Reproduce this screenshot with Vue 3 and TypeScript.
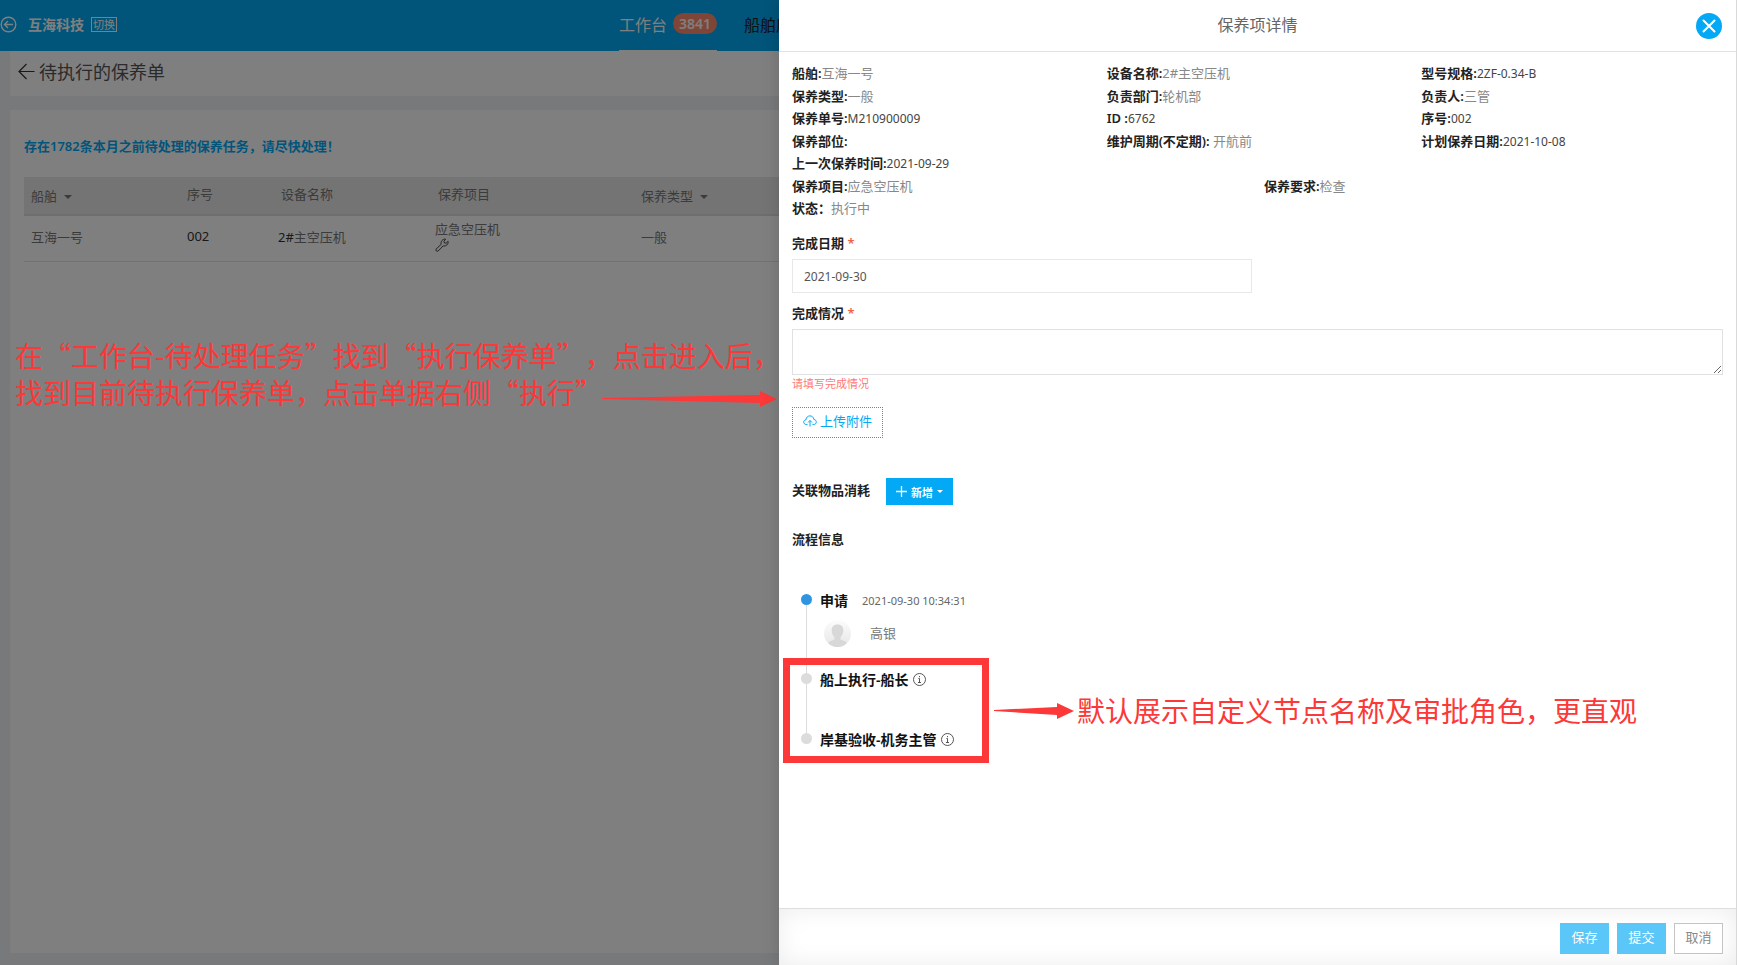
<script setup lang="ts">
import { ref } from 'vue'

interface Field {
  label: string
  value: string
  latin?: boolean
}

const fieldRows: Field[][] = [
  [
    { label: '船舶:', value: '互海一号' },
    { label: '设备名称:', value: '2#主空压机' },
    { label: '型号规格:', value: '2ZF-0.34-B', latin: true },
  ],
  [
    { label: '保养类型:', value: '一般' },
    { label: '负责部门:', value: '轮机部' },
    { label: '负责人:', value: '三管' },
  ],
  [
    { label: '保养单号:', value: 'M210900009', latin: true },
    { label: 'ID :', value: '6762', latin: true },
    { label: '序号:', value: '002', latin: true },
  ],
  [
    { label: '保养部位:', value: '' },
    { label: '维护周期(不定期):', value: ' 开航前' },
    { label: '计划保养日期:', value: '2021-10-08', latin: true },
  ],
  [{ label: '上一次保养时间:', value: '2021-09-29', latin: true }],
  [
    { label: '保养项目:', value: '应急空压机' },
    { label: '保养要求:', value: '检查' },
  ],
  [{ label: '状态：', value: '执行中' }],
]

const finishDate = ref('2021-09-30')
const finishNote = ref('')
</script>

<template>
  <div class="screen">
    <div class="app">
      <header class="topbar">
        <a href="#" class="back-link" aria-label="返回">
          <svg width="17" height="17" viewBox="0 0 17 17" fill="none" stroke="#fff" stroke-width="1.4">
            <circle cx="8.5" cy="8.5" r="7.3" />
            <path d="M13 8.5H4.5M8 5L4.5 8.5L8 12" />
          </svg>
        </a>
        <strong class="company">互海科技</strong>
        <button type="button" class="switch">切换</button>
        <nav class="nav">
          <a href="#" class="nav-item active">工作台<span class="count">3841</span></a>
          <a href="#" class="nav-item">船舶应用</a>
        </nav>
      </header>
      <main class="content">
        <div class="title-card">
          <svg width="17" height="17" viewBox="0 0 17 17" fill="none" stroke="#333" stroke-width="1.2">
            <path d="M16.500 8.500H1M8.500 1L1 8.500L8.500 16" />
          </svg>
          <h1>待执行的保养单</h1>
        </div>
        <section class="list-card">
          <p class="notice">存在1782条本月之前待处理的保养任务，请尽快处理！</p>
          <table class="orders">
            <colgroup>
              <col class="c-ship" /><col class="c-no" /><col class="c-device" /><col class="c-item" /><col />
            </colgroup>
            <thead>
              <tr>
                <th class="sortable">船舶<i class="caret"></i></th>
                <th>序号</th>
                <th class="inset">设备名称</th>
                <th class="inset">保养项目</th>
                <th class="sortable">保养类型<i class="caret"></i></th>
              </tr>
            </thead>
            <tbody>
              <tr>
                <td>互海一号</td>
                <td class="dark">002</td>
                <td><span class="dark">2#</span>主空压机</td>
                <td class="item-cell">
                  应急空压机
                  <svg width="14" height="14" viewBox="0 0 14 14" fill="none" stroke="#444" stroke-width="1" stroke-linejoin="round">
                    <path d="M1 11.200L6.200 6.300C5.500 3.500 7.500 .8 10.600 1.100L8.900 3.200L9.400 4.900L11.200 5.200L13.100 3.300C13.600 6.200 11.200 8.500 8.200 7.900L3.200 13C1.800 13.800 .2 12.600 1 11.200Z" />
                  </svg>
                </td>
                <td>一般</td>
              </tr>
            </tbody>
          </table>
        </section>
      </main>
    </div>

    <div class="mask">
      <div class="guide">
        <p>在“工作台-待处理任务”找到“执行保养单”，点击进入后，<br />找到目前待执行保养单，点击单据右侧“执行”</p>
        <svg class="guide-arrow" width="175" height="16" viewBox="0 0 175 16" fill="#fc3838">
          <path d="M0 7L158 4V0L175 8L158 16V12L0 8Z" />
        </svg>
      </div>

      <aside class="drawer">
        <header class="drawer-head">
          <h2>保养项详情</h2>
          <button type="button" class="close" aria-label="关闭">
            <svg width="14" height="14" viewBox="0 0 14 14" stroke="#fff" stroke-width="2" stroke-linecap="round">
              <path d="M1.500 1.500L12.500 12.500M12.500 1.500L1.500 12.500" />
            </svg>
          </button>
        </header>

        <div class="drawer-body">
          <div class="fields">
            <div v-for="(row, i) in fieldRows" :key="i" class="field-row" :class="{ halves: row.length === 2 }">
              <div v-for="f in row" :key="f.label">
                <b>{{ f.label }}</b><span class="value" :class="{ latin: f.latin }">{{ f.value }}</span>
              </div>
            </div>
          </div>

          <form class="form" @submit.prevent>
            <label for="finish-date">完成日期 <em>*</em></label>
            <input id="finish-date" v-model="finishDate" type="text" />
            <label for="finish-note">完成情况 <em>*</em></label>
            <textarea id="finish-note" v-model="finishNote"></textarea>
            <p class="error">请填写完成情况</p>
            <button type="button" class="upload">
              <svg width="14" height="12" viewBox="0 0 14 12" fill="none" stroke="#03a9f4" stroke-width="1">
                <path d="M4.500 9.500H3.200C-.2 9.200 .1 5 3 4.800C3.300-.3 10.300-.4 10.900 4.400C14.200 4.900 14 9.300 10.800 9.500H9.500M7 11.500V5.500M5 7.500L7 5.500L9 7.500" />
              </svg>
              上传附件
            </button>
          </form>

          <div class="consume">
            <b>关联物品消耗</b>
            <button type="button" class="add">
              <svg width="11" height="11" viewBox="0 0 11 11" stroke="#fff" stroke-width="1.3"><path d="M5.500 0V11M0 5.500H11" /></svg>
              新增
              <i class="caret small"></i>
            </button>
          </div>

          <h3>流程信息</h3>

          <div class="flow">
            <ol class="timeline">
              <li class="node done">
                <div class="node-head"><strong>申请</strong><time>2021-09-30 10:34:31</time></div>
                <div class="person">
                  <svg width="27" height="27" viewBox="0 0 27 27">
                    <defs>
                      <linearGradient id="avatar-bg" x1="0" y1="0" x2="0" y2="1">
                        <stop offset="0" stop-color="#fcfcfc" /><stop offset="1" stop-color="#e6e6e6" />
                      </linearGradient>
                      <clipPath id="avatar-clip"><circle cx="13.500" cy="13.500" r="13.500" /></clipPath>
                    </defs>
                    <g clip-path="url(#avatar-clip)">
                      <rect width="27" height="27" fill="url(#avatar-bg)" />
                      <path d="M13.500 4.500C17.500 4.500 19.600 7 19.300 11C19.100 14 17.800 15.800 16.600 17V19.500C19 20.800 22 21 23.500 24V27H3.500V24C5 21 8 20.800 10.400 19.500V17C9.200 15.800 7.900 14 7.700 11C7.400 7 9.500 4.500 13.500 4.500Z" fill="#d8d8d8" />
                    </g>
                  </svg>
                  <span>高银</span>
                </div>
              </li>
              <li v-for="name in ['船上执行-船长', '岸基验收-机务主管']" :key="name" class="node">
                <div class="node-head">
                  <strong>{{ name }}</strong>
                  <svg class="info" width="13" height="13" viewBox="0 0 13 13" fill="none" stroke="#444" stroke-width=".9">
                    <circle cx="6.500" cy="6.500" r="6" />
                    <path d="M6.500 3V4.200M5.400 5.500H6.500V9.500M5 9.500H8" />
                  </svg>
                </div>
              </li>
            </ol>
            <div class="highlight"></div>
            <div class="remark">
              <svg width="80" height="16" viewBox="0 0 80 16" fill="#fc3838"><path d="M0 7L63 4V0L80 8L63 16V12L0 8Z" /></svg>
              <span>默认展示自定义节点名称及审批角色，更直观</span>
            </div>
          </div>
        </div>

        <footer class="drawer-foot">
          <button type="button" class="primary">保存</button>
          <button type="button" class="primary">提交</button>
          <button type="button" class="cancel">取消</button>
        </footer>
      </aside>
    </div>
  </div>
</template>

<style>
body {
  margin: 0;
}
</style>

<style scoped>
.screen {
  position: relative;
  min-height: 100vh;
  overflow: hidden;
  font-family: 'Noto Sans', 'Noto Sans CJK SC', sans-serif;
  font-size: 13px;
  color: #777;
}
.screen *,
.screen *::before {
  box-sizing: border-box;
}
button,
input,
textarea {
  font: inherit;
}
h1,
h2,
h3,
p,
ol {
  margin: 0;
  padding: 0;
  font-weight: 400;
}
a {
  color: inherit;
  text-decoration: none;
}

.app {
  display: flex;
  flex-direction: column;
  min-height: 100vh;
  background: #eff2f7;
}
.topbar {
  display: flex;
  align-items: center;
  height: 51px;
  padding-bottom: 3px;
  background: #03a9f4;
  color: #fff;
}
.back-link {
  display: flex;
  width: 28px;
}
.company {
  font-size: 14px;
}
.switch {
  height: 15px;
  margin-left: 7px;
  padding: 0 1px;
  border: 1px solid #fff;
  background: none;
  color: #fff;
  font-size: 11px;
  line-height: 13px;
}
.nav {
  display: flex;
  gap: 27px;
  height: 51px;
  margin: 0 0 -3px auto;
  width: 1118px;
  font-size: 16px;
}
.nav-item {
  display: flex;
  align-items: center;
  color: #222;
  padding-bottom: 4px;
}
.nav-item.active {
  gap: 6px;
  padding-bottom: 3px;
  border-bottom: 1px solid #fff;
  color: #fff;
}
.count {
  padding: 0 6px;
  border-radius: 11px;
  background: #ff8a6c;
  font-size: 14px;
  font-weight: 600;
  line-height: 21px;
}
.content {
  display: flex;
  flex: 1;
  flex-direction: column;
  gap: 14px;
  padding: 0 0 12px 10px;
}
.title-card {
  display: flex;
  align-items: center;
  gap: 4px;
  height: 45px;
  padding: 0 8px 4px;
  background: #fff;
}
h1 {
  color: #555;
  font-size: 18px;
  line-height: 26px;
}
.list-card {
  flex: 1;
  padding: 24px 14px;
  background: #fff;
}
.notice {
  margin-bottom: 19px;
  color: #03a9f4;
  font-weight: 600;
  font-size: 13px;
  line-height: 24px;
}
.orders {
  width: 100%;
  border-collapse: collapse;
  table-layout: fixed;
}
.c-ship {
  width: 156px;
}
.c-no {
  width: 91px;
}
.c-device {
  width: 157px;
}
.c-item {
  width: 206px;
}
.orders th {
  height: 38px;
  padding: 0 7px 4px;
  border-bottom: 2px solid #dcdcdc;
  background: #e9e9e9;
  font-weight: 400;
  text-align: left;
}
.orders th.sortable {
  padding-bottom: 0;
}
.orders th.inset {
  padding-left: 10px;
}
.orders td {
  height: 46px;
  padding: 0 7px 4px;
  border-bottom: 1px solid #e4e4e4;
}
.orders .dark {
  color: #333;
}
.orders .item-cell {
  line-height: 17px;
}
.item-cell svg {
  display: block;
}
.caret {
  display: inline-block;
  margin-left: 7px;
  border: 4px solid transparent;
  border-top-color: currentColor;
  border-bottom: 0;
  vertical-align: 2px;
}
.caret.small {
  margin-left: 0;
  border-width: 3px;
  border-bottom: 0;
}

.mask {
  position: absolute;
  inset: 0;
  display: grid;
  grid-template-columns: minmax(0, 779fr) minmax(0, 958fr);
  background: rgba(0, 0, 0, 0.5);
}
.guide {
  position: relative;
  padding: 337px 0 0 15px;
}
.guide p,
.remark {
  color: #fc3838;
  font-family: 'Noto Sans CJK SC', sans-serif;
  font-size: 28px;
  line-height: 37px;
  white-space: nowrap;
  text-spacing-trim: space-all;
}
.guide-arrow {
  position: absolute;
  right: 2px;
  top: 391px;
}

.drawer {
  position: relative;
  display: flex;
  flex-direction: column;
  border-right: 1px solid #d9d9d9;
  background: #fff;
  box-shadow: 0 0 16px rgba(0, 0, 0, 0.15);
}
.drawer-head {
  display: grid;
  grid-template-columns: 40px 1fr 40px;
  align-items: center;
  height: 52px;
  border-bottom: 1px solid #e2e2e2;
}
h2 {
  grid-column: 2;
  padding-bottom: 4px;
  color: #666;
  font-size: 16px;
  text-align: center;
}
.close {
  display: flex;
  align-items: center;
  justify-content: center;
  width: 26px;
  height: 26px;
  padding: 0;
  border: 0;
  border-radius: 50%;
  background: #03a9f4;
}
.drawer-body {
  flex: 1;
  padding: 10px 0 0 13px;
}
.field-row {
  display: grid;
  grid-template-columns: repeat(3, 1fr);
  height: 23px;
  line-height: 23px;
  white-space: pre;
}
.field-row:nth-child(even) {
  height: 22px;
}
.field-row.halves {
  grid-template-columns: 1fr 1fr;
}
b,
.form label {
  color: #222;
  font-weight: 600;
}
.value {
  color: #888;
}
.value.latin {
  color: #444;
  font-size: 12px;
}
.form {
  display: flex;
  flex-direction: column;
  align-items: flex-start;
  margin-top: 10px;
  padding-right: 13px;
}
.form label {
  line-height: 26px;
}
.form em {
  color: #f0653f;
  font-style: normal;
}
.form input {
  width: calc(50% - 6px);
  height: 34px;
  margin: 3px 0 7px;
  padding: 0 11px;
  border: 1px solid #e6e8ea;
  color: #555;
  font-size: 12px;
}
.form textarea {
  width: 100%;
  height: 46px;
  margin: 3px 0 0;
  border: 1px solid #dfe1e3;
  resize: vertical;
}
.error {
  color: #ff7878;
  font-size: 11px;
  line-height: 18px;
}
.upload {
  display: flex;
  align-items: center;
  gap: 3px;
  height: 31px;
  margin-top: 14px;
  padding: 0 10px 4px;
  border: 1px dotted #03a9f4;
  background: #fff;
  color: #03a9f4;
}
.consume {
  display: flex;
  align-items: center;
  gap: 16px;
  margin-top: 40px;
}
.consume b {
  padding-bottom: 4px;
}
.add {
  display: flex;
  align-items: center;
  gap: 4px;
  height: 27px;
  padding: 0 10px;
  border: 0;
  background: #03a9f4;
  color: #fff;
  font-size: 11px;
  font-weight: 600;
}
h3 {
  margin-top: 23px;
  color: #222;
  font-size: 13px;
  font-weight: 600;
  line-height: 22px;
}
.flow {
  position: relative;
  margin-top: 39px;
}
.timeline {
  list-style: none;
}
.node {
  position: relative;
  min-height: 60px;
  padding-left: 28px;
}
.node.done {
  min-height: 79px;
}
.node::before {
  content: '';
  position: absolute;
  z-index: 1;
  left: 9px;
  top: 5px;
  width: 11px;
  height: 11px;
  border-radius: 50%;
  background: #dcdcdc;
}
.node.done::before {
  background: #2f95e3;
}
.node:not(:last-child)::after {
  content: '';
  position: absolute;
  left: 14px;
  top: 10px;
  width: 1px;
  height: 100%;
  background: #dcdcdc;
}
.node-head {
  display: flex;
  align-items: center;
  height: 22px;
}
.node-head strong {
  color: #111;
  font-size: 14px;
  font-weight: 600;
}
.node-head time {
  margin-left: 14px;
  font-size: 11px;
  color: #666;
}
.info {
  margin-left: 5px;
}
.person {
  display: flex;
  align-items: center;
  gap: 19px;
  padding: 9px 0 0 4px;
}
.person span {
  padding-bottom: 3px;
}
.highlight {
  position: absolute;
  z-index: 2;
  left: -9px;
  top: 69px;
  width: 206px;
  height: 105px;
  border: 7px solid #fc3838;
}
.remark {
  position: absolute;
  left: 202px;
  top: 103px;
  display: flex;
  align-items: center;
  gap: 3px;
}
.drawer-foot {
  display: flex;
  align-items: center;
  justify-content: flex-end;
  gap: 8px;
  height: 57px;
  padding: 3px 13px 0 0;
  border-top: 1px solid #dedede;
  box-shadow: inset 0 0 24px rgba(0, 0, 0, 0.08);
}
.drawer-foot button {
  width: 49px;
  height: 31px;
  padding: 0 0 4px;
  border: 0;
  background: #5bc6f8;
  color: #fff;
}
.drawer-foot .cancel {
  border: 1px solid #c4c4c4;
  background: #fff;
  color: #888;
}
</style>
